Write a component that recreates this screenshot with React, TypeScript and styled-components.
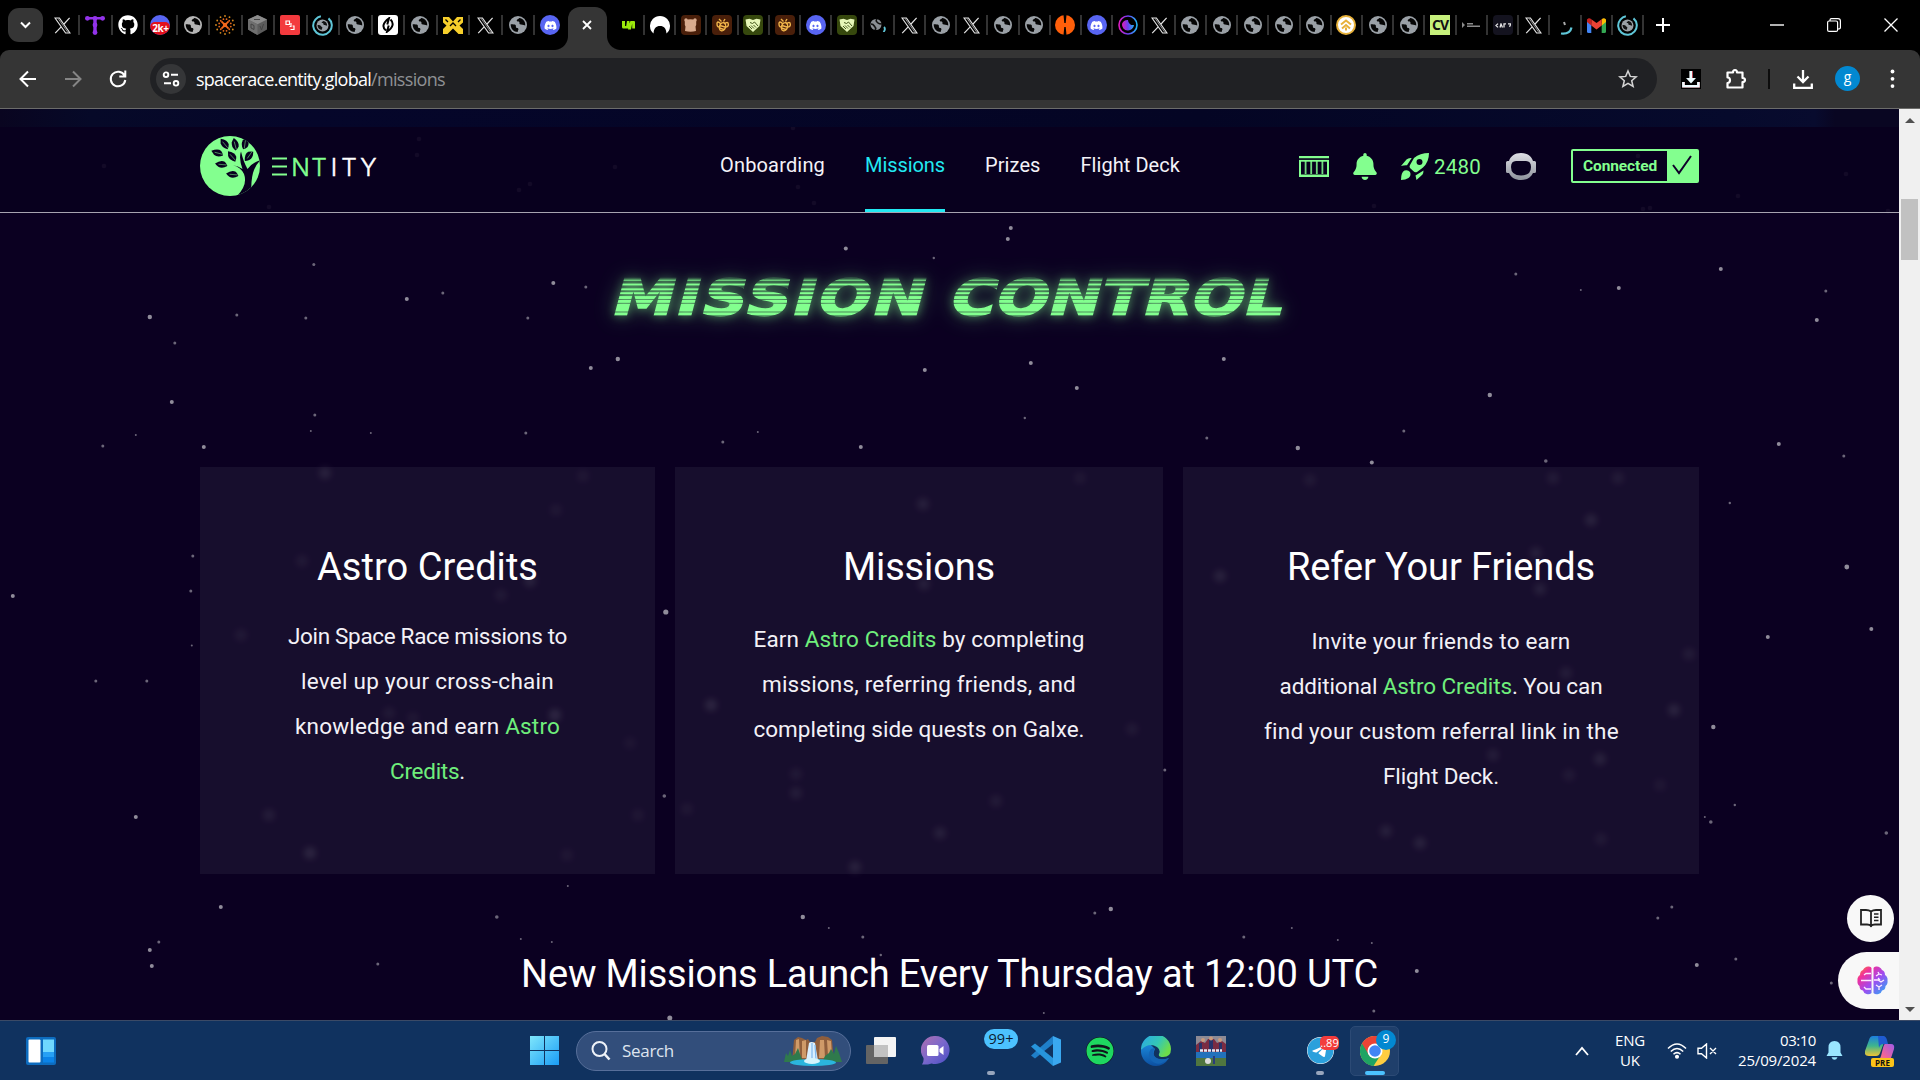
import React, { useLayoutEffect, useRef, useState } from "react";
import styled, { createGlobalStyle, css } from "styled-components";
import { FaBell, FaGithub, FaDiscord, FaSpotify, FaTelegram } from "react-icons/fa6";

const GREEN = "#83ff8f";
const SITE = `Roboto, "Liberation Sans", sans-serif`;
const OS = `"Open Sans", "Noto Sans", sans-serif`;

const Global = createGlobalStyle`
  * { box-sizing: border-box; }
  body { margin: 0; background: #000; overflow: hidden; }
  svg { display: block; flex: none; }
`;

/* Tracks a line of text so that it occupies a given measure. */
const Line = styled.span<{ $w: number }>`
  display: block;
  width: ${(p) => p.$w}px;
  flex: none;
  white-space: nowrap;
`;
function Fit({ w, children }: { w: number; children: React.ReactNode }) {
  const ref = useRef<HTMLSpanElement>(null);
  const [spacing, setSpacing] = useState(0);
  useLayoutEffect(() => {
    const el = ref.current;
    if (!el) return;
    const n = (el.textContent || "").length;
    setSpacing((w - el.getBoundingClientRect().width) / n);
  }, [w]);
  return (
    <Line $w={w}>
      <span ref={ref} style={{ letterSpacing: spacing }}>
        {children}
      </span>
    </Line>
  );
}

/* ---------- Shell ---------- */
const Screen = styled.div`
  width: 1920px;
  height: 1080px;
  display: flex;
  flex-direction: column;
  overflow: hidden;
  background: #000;
`;

/* ---------- Tab strip ---------- */
const TabStrip = styled.div`
  height: 50px;
  flex: none;
  display: flex;
  align-items: center;
  padding-left: 8px;
  background: #000;
`;
const TabSearch = styled.div`
  width: 35px;
  height: 34px;
  border-radius: 11px;
  background: #353535;
  display: flex;
  align-items: center;
  justify-content: center;
`;
const Tabs = styled.div<{ $ml: number }>`
  display: flex;
  margin-left: ${(p) => p.$ml}px;
`;
const Tab = styled.div<{ $w: number; $line: boolean }>`
  width: ${(p) => p.$w}px;
  height: 20px;
  flex: none;
  display: flex;
  align-items: center;
  justify-content: center;
  border-right: 2px solid ${(p) => (p.$line ? "#333" : "transparent")};
`;
const ActiveTab = styled.div`
  width: 39px;
  height: 43px;
  align-self: flex-end;
  flex: none;
  display: flex;
  align-items: center;
  justify-content: center;
  padding-bottom: 7px;
  background: #353535;
  border-radius: 12px 12px 0 0;
`;
const Flare = styled.div<{ $side: "left" | "right" }>`
  width: 14px;
  height: 14px;
  flex: none;
  align-self: flex-end;
  margin-left: ${(p) => (p.$side === "left" ? -13.8 : 0)}px;
  background: radial-gradient(circle at ${(p) => (p.$side === "left" ? "0 0" : "100% 0")}, #000 13.5px, #353535 14.5px);
`;
const WindowButtons = styled.div`
  display: flex;
  align-items: center;
  gap: 43px;
  margin: 0 22px 0 auto;
`;
const NewTab = styled.div`
  margin-left: 12px;
`;
const Square = styled.div<{ $bg: string; $r?: number; $color?: string; $size?: number }>`
  width: 20px;
  height: 20px;
  border-radius: ${(p) => p.$r ?? 3}px;
  background: ${(p) => p.$bg};
  color: ${(p) => p.$color ?? "#fff"};
  font: 700 ${(p) => p.$size ?? 12}px/20px ${OS};
  letter-spacing: -1px;
  text-align: center;
  overflow: hidden;
  display: flex;
  align-items: center;
  justify-content: center;
`;
const DiscordBadge = styled.div`
  height: 13px;
  width: 20px;
  margin-top: 7px;
  border-radius: 5px;
  background: #e3101b;
  color: #fff;
  font: 700 10px/12px ${OS};
  letter-spacing: -0.4px;
  text-align: center;
`;

/* ---------- Toolbar ---------- */
const ToolbarWrap = styled.div`
  height: 59px;
  flex: none;
  background: #353535;
  border-bottom: 1px solid #6c6c6a;
  border-radius: 9px 9px 0 0;
  display: flex;
  align-items: center;
  padding: 0 20px 1px 18px;
`;
const NavButtons = styled.div`
  display: flex;
  gap: 25px;
  margin-right: 22px;
`;
const Omnibox = styled.div`
  width: 1507px;
  height: 42px;
  flex: none;
  border-radius: 21px;
  background: #202124;
  display: flex;
  align-items: center;
  padding: 0 19px 0 6px;
  color: #fff;
  font: 400 18px/42px ${OS};
`;
const SiteInfo = styled.div`
  width: 30px;
  height: 30px;
  border-radius: 50%;
  background: #353638;
  display: flex;
  align-items: center;
  justify-content: center;
  margin-right: 10px;
`;
const Path = styled.div`
  color: #8f9194;
  margin-right: auto;
`;
const Extensions = styled.div`
  display: flex;
  align-items: center;
  margin-left: 24px;
`;
const Puzzle = styled.svg`
  margin-left: 24px;
`;
const Divider = styled.div`
  width: 2px;
  height: 20px;
  background: #0c0c0c;
  margin: 0 23px 0 21px;
`;
const Avatar = styled.div`
  width: 25px;
  height: 25px;
  border-radius: 50%;
  background: #0288d1;
  color: #fff;
  font: 400 14px/21px ${OS};
  text-align: center;
  margin: 0 30px 0 22px;
`;

/* ---------- Page ---------- */
const Viewport = styled.div`
  position: relative;
  height: 911px;
  flex: none;
  display: flex;
  background: #0b0021;
`;
const Stars = styled.svg`
  position: absolute;
  inset: 0;
`;
const Page = styled.div`
  position: relative;
  width: 1899px;
  display: flex;
  flex-direction: column;
  align-items: center;
  font-family: ${SITE};
  color: #fff;
`;
const Banner = styled.div`
  width: 100%;
  height: 18px;
  flex: none;
  background: linear-gradient(90deg, #090520 0, #060928 90px, #05062a 300px, #040524 1200px, #060a2c 1730px, #080b2e 1815px, #090622 1835px);
`;
const Header = styled.header`
  width: 100%;
  height: 86px;
  flex: none;
  padding: 0 200px;
  display: flex;
  border-bottom: 1px solid #a7a3b0;
  background: rgba(8, 0, 30, 0.75);
`;
const Brand = styled.div`
  display: flex;
  align-items: center;
  width: 520px;
  padding-bottom: 8px;
`;
const Nav = styled.nav`
  display: flex;
  gap: 40px;
  font-size: 20px;
`;
const NavItem = styled.div<{ $active?: boolean }>`
  height: 85px;
  padding-top: 21px;
  line-height: 34px;
  color: ${(p) => (p.$active ? "#22e9f2" : "#f4f2f8")};
  border-bottom: 3px solid ${(p) => (p.$active ? "#22e9f2" : "transparent")};
`;
const Status = styled.div`
  display: flex;
  align-items: center;
  margin-left: auto;
  padding-bottom: 8px;
  color: ${GREEN};
  font-size: 20.5px;
`;
const Item = styled.div<{ $mr: number }>`
  display: flex;
  align-items: center;
  gap: 5px;
  margin-right: ${(p) => p.$mr}px;
  padding-top: 1px;
  ${Line} {
    padding-top: 2px;
  }
`;
const Bell = styled(FaBell)`
  width: 24px;
  height: 27px;
`;
const Connected = styled.div`
  width: 128px;
  height: 34px;
  border: 2px solid ${GREEN};
  border-radius: 2px;
  display: flex;
  align-items: center;
  font-size: 15.5px;
  font-weight: 700;
  padding-left: 10px;
`;
const Check = styled.div`
  width: 30px;
  height: 30px;
  margin-left: auto;
  background: ${GREEN};
  display: flex;
  align-items: center;
  justify-content: center;
`;
const Title = styled.h1`
  margin: 58px 0 0;
  height: 54px;
  flex: none;
  width: 667px;
  display: flex;
  justify-content: center;
  filter: drop-shadow(0 0 5px rgba(131, 255, 143, 0.5)) drop-shadow(0 0 10px rgba(131, 255, 143, 0.35));
`;
const TitleText = styled.span`
  font: 700 50px/54px "DejaVu Sans", sans-serif;
  white-space: nowrap;
  transform: skewX(-15deg) scaleX(1.245);
  -webkit-text-stroke: 1.4px transparent;
  color: transparent;
  background-clip: text;
  -webkit-background-clip: text;
  background-image: ${() => {
    const thick = [1, 1.6, 2, 2.4, 2.7, 3, 3.2, 3.2, 3.3, 3.3];
    const gap = "rgba(131,255,143,.22)";
    const stops = thick.map((t, i) => {
      const y = 9 + i * 4;
      return `${gap} ${y}px, ${GREEN} ${y}px, ${GREEN} ${y + t}px, ${gap} ${y + t}px`;
    });
    return `linear-gradient(180deg, ${stops.join(", ")})`;
  }};
`;
const Spaced = styled.span`
  letter-spacing: 1.6px;
`;
const Cards = styled.div`
  display: grid;
  grid-template-columns: 455px 488px 516px;
  gap: 20px;
  margin-top: 142px;
  width: 1499px;
  height: 407px;
  flex: none;
`;
const Card = styled.section`
  background: rgba(235, 255, 255, 0.053);
  display: flex;
  flex-direction: column;
  align-items: center;
  padding-top: 76px;
`;
const Heading = styled.h2`
  margin: 0;
  font-size: 38px;
  font-weight: 400;
  line-height: 48px;
`;
const Copy = styled.div<{ $mt: number }>`
  margin-top: ${(p) => p.$mt}px;
  display: flex;
  flex-direction: column;
  align-items: center;
  font-size: 22.5px;
  line-height: 45px;
  font-weight: 400;
  color: #f3f1f7;
  em {
    font-style: normal;
    color: #6fee7c;
  }
`;
const Launch = styled.div`
  margin-top: 76px;
  height: 48px;
`;
const Scrollbar = styled.div`
  position: relative;
  width: 21px;
  background: #f0f0f0;
  display: flex;
  flex-direction: column;
  align-items: center;
`;
const Arrow = styled.div<{ $down?: boolean }>`
  width: 0;
  height: 0;
  border: 5px solid transparent;
  ${(p) =>
    p.$down
      ? css`border-top-color: #505050; margin: auto 0 3px;`
      : css`border-bottom-color: #505050; margin-top: 4px;`}
`;
const Thumb = styled.div`
  width: 17px;
  height: 61px;
  margin-top: 76px;
  background: #c1c1c1;
`;
const Floating = styled.aside`
  position: absolute;
  right: 21px;
  top: 786px;
  display: flex;
  flex-direction: column;
  align-items: flex-end;
  gap: 10px;
`;
const BookButton = styled.div`
  width: 47px;
  height: 47px;
  margin-right: 5px;
  border-radius: 50%;
  background: #f8f8f8;
  display: flex;
  align-items: center;
  justify-content: center;
`;
const BrainButton = styled.div`
  width: 61px;
  height: 57px;
  border-radius: 29px 0 0 29px;
  background: #f8f8f8;
  display: flex;
  align-items: center;
  padding-left: 19px;
`;

/* ---------- Taskbar ---------- */
const Taskbar = styled.footer`
  height: 60px;
  flex: none;
  display: flex;
  align-items: center;
  background: #10325f;
  border-top: 1px solid #3b4a66;
  font-family: ${OS};
  color: #fff;
`;
const Slot = styled.div<{ $ml: number; $w?: number }>`
  position: relative;
  margin-left: ${(p) => p.$ml}px;
  width: ${(p) => p.$w ?? 30}px;
  height: 60px;
  flex: none;
  display: flex;
  align-items: center;
  justify-content: center;
`;
const SearchBox = styled.div`
  width: 275px;
  height: 40px;
  margin-left: 17px;
  flex: none;
  border: 1px solid #576f9a;
  border-radius: 20px;
  background: #324e7b;
  display: flex;
  align-items: center;
  padding: 0 8px 0 14px;
  font-size: 17px;
  color: #dfe5ef;
`;
const SearchLabel = styled.div`
  margin: 0 auto 0 11px;
`;
const Dot = styled.div<{ $w?: number; $c?: string }>`
  position: absolute;
  bottom: 6px;
  left: 50%;
  width: ${(p) => p.$w ?? 8}px;
  height: 4px;
  margin-left: -${(p) => (p.$w ?? 8) / 2}px;
  border-radius: 2px;
  background: ${(p) => p.$c ?? "#98a6bd"};
`;
const Count = styled.div`
  position: absolute;
  top: 8px;
  left: 8px;
  width: 34px;
  height: 20px;
  border-radius: 10px;
  background: #4cc2ff;
  color: #0c1c30;
  font-size: 14.5px;
  line-height: 20px;
  text-align: center;
`;
const RedBadge = styled.div`
  position: absolute;
  top: 15px;
  left: 15px;
  width: 19px;
  height: 14px;
  border-radius: 5px;
  background: #f33c3c;
  font-size: 11px;
  line-height: 13px;
  text-align: center;
`;
const SpotifyMark = styled(FaSpotify)`
  background: #10141c;
  border-radius: 50%;
`;
const TelegramMark = styled(FaTelegram)`
  background: #fff;
  border-radius: 50%;
`;
const BlueBadge = styled.div`
  position: absolute;
  top: 3px;
  right: 2px;
  width: 20px;
  height: 20px;
  border-radius: 50%;
  background: #0288d1;
  font-size: 12px;
  line-height: 18px;
  text-align: center;
`;
const ActiveApp = styled.div`
  position: relative;
  width: 49px;
  height: 50px;
  margin-left: 15px;
  flex: none;
  border-radius: 5px;
  background: #1f3f6b;
  border: 1px solid #2c4a75;
  display: flex;
  align-items: center;
  justify-content: center;
  ${Dot} {
    bottom: 0;
  }
`;
const TwoLine = styled.div<{ $ml: number; $align: string }>`
  margin-left: ${(p) => p.$ml}px;
  display: flex;
  flex-direction: column;
  align-items: ${(p) => p.$align};
  font-size: 15px;
  line-height: 20px;
  margin-top: -2px;
`;
const Pre = styled.div`
  position: absolute;
  left: 6px;
  bottom: 14px;
  width: 23px;
  height: 9px;
  border-radius: 2px;
  background: #fcc419;
  color: #111;
  font: 700 8px/9px ${OS};
  text-align: center;
`;

/* ---------- Small drawings ---------- */
const XIcon = () => (
  <svg width="17" height="17" viewBox="0 0 17 17" fill="none" stroke="#e4e4e4" strokeWidth="1.2">
    <path d="M1 1h4.4L16 16h-4.4zM15.6.8 9.6 7.5M7.4 9.7 1.2 16.2" />
    <path d="M4 1.4 14 15.6" strokeWidth=".6" />
  </svg>
);
const GlobeIcon = ({ c = "#9aa0a6", s = 18 }: { c?: string; s?: number }) => (
  <svg width={s} height={s} viewBox="0 0 18 18">
    <circle cx="9" cy="9" r="9" fill={c} />
    <path d="M1.7 8.3c2.5.2 4.3-.1 5 .9.6 1-.2 1.7.4 2.4.9.9 2 .3 2.3 1.3.2.9-.8 1.6-.7 3.2-4-.1-7.2-3.4-7-7.800z" fill="#050505" />
    <path d="M10.2 1.900c-.5 1.2-2.600 1.1-2.500 2.500.1 1.300 2 .6 2.600 1.500.5.9-.3 1.800.6 2.300 1.400.7 3.400.3 5.300 1.200C16.700 5.400 14 2.400 10.200 1.900z" fill="#050505" />
  </svg>
);
const RingGlobe = ({ s = 21 }: { s?: number }) => (
  <svg width={s} height={s} viewBox="0 0 21 21" fill="none">
    <circle cx="10.5" cy="10.5" r="9.3" stroke="#5fc6d8" strokeWidth="2" strokeDasharray="50 8.4" transform="rotate(-50 10.5 10.5)" />
    <circle cx="10.5" cy="10.5" r="6" fill="#9aa0a6" />
    <path d="M5.5 10c2 0 3 0 3.3 1 .3 1 1.6.8 1.6 1.6s-.6 1.2-.5 2.2c-2.5 0-4.4-2-4.4-4.8zM11.3 6c-.4.8-1.7.8-1.6 1.6.1.9 1.3.5 1.6 1 .4.7 0 1.3.6 1.5.9.3 2 .1 3.2.7.2-2.5-1.4-4.4-3.8-4.8z" fill="#111" />
  </svg>
);
const DiscordIcon = () => (
  <Square $bg="#5865f2" $r={10}>
    <FaDiscord size={13} color="#fff" />
  </Square>
);
const TIcon = () => (
  <svg width="20" height="20" viewBox="0 0 20 20" fill="#9333ea">
    <path d="M2 2h16v2.600H2zM8.300 3h3.400v15H8.300z" />
    <circle cx="2.400" cy="3.300" r="2.400" /><circle cx="10" cy="3.300" r="2.400" /><circle cx="17.600" cy="3.300" r="2.400" />
    <circle cx="10" cy="10" r="2.400" /><circle cx="10" cy="17.500" r="2.400" />
  </svg>
);
const Burst = () => (
  <svg width="20" height="20" viewBox="-10 -10 20 20">
    <path d="M-3.600-3.600 3.600 3.600M3.600-3.600-3.600 3.600" stroke="#f0681c" strokeWidth="1.800" />
    <circle r="2.200" fill="#f0681c" />
    {Array.from({ length: 12 }, (_, i) => {
      const a = (i * Math.PI) / 6;
      return (
        <g key={i}>
          <circle cx={9 * Math.cos(a)} cy={9 * Math.sin(a)} r=".9" fill="#d98a1e" />
          <circle cx={6 * Math.cos(a + 0.26)} cy={6 * Math.sin(a + 0.26)} r=".9" fill="#e3691c" />
        </g>
      );
    })}
  </svg>
);
const Cube = () => (
  <svg width="19" height="20" viewBox="0 0 19 20">
    <path d="M9.500 0 19 4.600v10L9.500 20 0 14.600v-10z" fill="#5c5c5c" />
    <path d="M9.500 0 19 4.600 9.500 9.200 0 4.600z" fill="#8b8b8b" />
    <path d="M9.500 9.200V20L0 14.600v-10z" fill="#6f6f6f" />
    <path d="M3 9v4l3 1.500v-4zM12 11l1.500 4 2-6M6 4.500h6" stroke="#444" fill="none" />
  </svg>
);
const RedSquares = () => (
  <Square $bg="#f33a3e" $r={2}>
    <svg width="10" height="11" viewBox="0 0 10 11" fill="none" stroke="#fff" strokeWidth="1.200">
      <path d="M1 4.500V1h3.500v3.500zM4.500 6.500H6V3M5.500 9.500H9V6H7.500" />
    </svg>
  </Square>
);
const Leaf = () => (
  <Square $bg="#fff">
    <svg width="14" height="16" viewBox="0 0 14 16" fill="none" stroke="#000" strokeWidth="2">
      <path d="M5 13.500C1 10.500 1.500 6 8 1.200L6.300 7.500M9.500 2.500C13 6 12.500 10 6 14.800L7.700 8.500" />
    </svg>
  </Square>
);
const YellowM = () => (
  <svg width="20" height="17" viewBox="0 0 20 17" fill="#f7cf2b">
    <path d="M0 0h6l4 4.500L14 0h6v5.500l-3.500 3L20 12v5h-4.500L10 11.500 4.500 17H0v-5l3.500-3.500L0 5.500z" />
    <path d="M2.500 2.500 5 5M17.500 2.500 15 5M7 9l3-3 3 3M8 17l2-2 2 2" stroke="#000" strokeWidth="1.300" fill="none" />
  </svg>
);
const GreenU = () => (
  <svg width="13" height="10" viewBox="0 0 13 10" fill="#9be80c">
    <path d="M0 1h3v5h1.200L5 1h2.500L6.800 8.500H1.500Q0 8.500 0 7zM6 9.500 7 4l1.500-3H12q1 0 1 1v6.500h-2.800V3.500L9 9.500z" />
  </svg>
);
const Arch = () => (
  <svg width="20" height="20" viewBox="0 0 20 20">
    <path d="M3.500 18.500A10 10 0 1 1 16.500 18.500C16 13 14 11 10 11S4 13 3.500 18.500z" fill="#fff" />
  </svg>
);
const Bear = () => (
  <Square $bg="#4a1f0a" $r={4}>
    <svg width="13" height="14" viewBox="0 0 13 14" fill="#d9ab8e">
      <circle cx="2" cy="2" r="1.700" /><circle cx="11" cy="2" r="1.700" />
      <path d="M.8 2q5.700-1.500 11.400 0v5l-.7 1.500.5 4.500q-5.500 1.500-11 0l.5-4.500L.8 7z" />
    </svg>
  </Square>
);
const Honey = () => (
  <Square $bg="#4a1f0a" $r={4}>
    <svg width="13" height="14" viewBox="0 0 13 14" fill="none" stroke="#f0b54a" strokeWidth="1.400">
      <path d="M3 1l2.500 2.500M9 1 7.500 3.500" />
      <ellipse cx="6.500" cy="8.700" rx="3" ry="4.200" transform="rotate(20 6.500 8.700)" />
      <path d="M4 7.500 9 9M3.500 10l4.500 1.500" />
      <path d="M5 6Q1 2 1 6t3.500 2.500M8 6q4-3 4.300 0T9.500 9" />
    </svg>
  </Square>
);
const Hands = () => (
  <Square $bg="#36480d" $r={4}>
    <svg width="16" height="14" viewBox="0 0 16 14">
      <path d="M.5 1.500l4-.8L8 2l3.500-1.300 4 .8-1 6.500L8 14 1.500 8z" fill="#e6f6b8" />
      <path d="M5 4.500l2.500 1L9.500 4l3.500 4M4 8l3 3M6 7.500l3 3M8.500 7l2.500 2.500" stroke="#36480d" fill="none" strokeWidth=".9" />
    </svg>
  </Square>
);
const TinyGlobe = () => (
  <svg width="16" height="14" viewBox="0 0 16 14">
    <circle cx="6" cy="6.500" r="5.500" fill="#8a8f94" />
    <path d="M1 6c3 0 3 2 4 3s1 2 0 3M7 1C5 3 7 4 8 5s2 1 4 1" stroke="#111" strokeWidth="1.600" fill="none" />
    <path d="M14 9q2 2-.5 5" stroke="#5fc6d8" strokeWidth="1.800" fill="none" />
  </svg>
);
const OrangeH = () => (
  <svg width="20" height="20" viewBox="0 0 20 20">
    <circle cx="10" cy="10" r="10" fill="#ff5f0a" />
    <path d="M8.500 0h3L10.700 8h-1.400zM8.500 20h3L10.700 12h-1.400z" fill="#000" />
  </svg>
);
const Swirl = () => (
  <svg width="20" height="20" viewBox="0 0 20 20" fill="none">
    <defs>
      <linearGradient id="swirl" x1="0" x2="1">
        <stop offset="0" stopColor="#e01cc0" /><stop offset=".5" stopColor="#6a3ff0" /><stop offset="1" stopColor="#21b5f5" />
      </linearGradient>
    </defs>
    <circle cx="10" cy="10" r="9" stroke="url(#swirl)" strokeWidth="1.600" />
    <path d="M4 9a6 6 0 1 0 12 1 5 5 0 0 1-6-5 6 6 0 0 0-6 4z" fill="url(#swirl)" />
  </svg>
);
const GoldCoin = () => (
  <svg width="20" height="20" viewBox="0 0 20 20" fill="none">
    <circle cx="10" cy="10" r="9" fill="#fff" stroke="#e7b13a" strokeWidth="2" />
    <path d="M5 9.500 10 5.500l5 4M6 13.500l4-3.500 4 3.500M10 12.500v3" stroke="#e7b13a" strokeWidth="2" />
  </svg>
);
const CoreText = () => (
  <svg width="18" height="6" viewBox="0 0 18 6">
    <path d="M0 0l3 3-3 3zM5 1h6v1.500H5zM5 3.500h13V5H5z" fill="#8b8b8b" />
  </svg>
);
const Darks = () => (
  <Square $bg="#14131f" $r={4} $size={6}>
    <svg width="16" height="5" viewBox="0 0 16 5" fill="none" stroke="#e8e8e8" strokeWidth="1.300">
      <path d="M3 .6 1 2.500l2 1.900M5 4.500 6 1l1.500 3.500M9 4.500V.8h2M13 .8h3l-1.500 3" />
    </svg>
  </Square>
);
const Arc = () => (
  <svg width="20" height="20" viewBox="0 0 20 20" fill="none">
    <path d="M6 18.500q9 1 10.500-6" stroke="#5fc6d8" strokeWidth="2.200" />
    <path d="M9 7l1 3" stroke="#aaa" strokeWidth="2" />
  </svg>
);
const Gmail = () => (
  <svg width="19" height="15" viewBox="0 0 19 15">
    <path d="M0 2v11.500Q0 15 1.500 15H4.300V5z" fill="#4285f4" />
    <path d="M14.700 15h2.800q1.500 0 1.500-1.500V2l-4.300 3z" fill="#34a853" />
    <path d="M14.700 5V1.200Q17-.7 19 1.500V4l-4.300 3.600z" fill="#fbbc04" />
    <path d="M4.300 7.600V1.200L9.500 5l5.200-3.800v6.400L9.500 11.500z" fill="#ea4335" />
    <path d="M0 1.500Q2-.7 4.300 1.200v6.400L0 4z" fill="#c5221f" />
  </svg>
);

const X = <XIcon />, G = <GlobeIcon />, D = <DiscordIcon />;
const leftTabs = [
  X, <TIcon />, <FaGithub size={20} color="#fff" />,
  <Square $bg="#5865f2" $r={10}><DiscordBadge>2k+</DiscordBadge></Square>,
  <GlobeIcon c="#b5b5b5" />, <Burst />, <Cube />, <RedSquares />, <RingGlobe />, G, <Leaf />, G, <YellowM />, X, G, D,
];
const rightTabs = [
  <GreenU />, <Arch />, <Bear />, <Honey />, <Hands />, <Honey />, D, <Hands />, <TinyGlobe />, X, G, X, G, G,
  <OrangeH />, D, <Swirl />, X, G, G, G, G, G, <GoldCoin />, G, G,
  <Square $bg="#c6f07c" $r={0} $color="#111" $size={14}>CV</Square>,
  <CoreText />, <Darks />, X, <Arc />, <Gmail />, <RingGlobe />,
];

const Ico = ({ d, s = 20, w = 2, c = "#fff", box = 20 }: { d: string; s?: number; w?: number; c?: string; box?: number }) => (
  <svg width={s} height={s} viewBox={`0 0 ${box} ${box}`} fill="none" stroke={c} strokeWidth={w}>
    <path d={d} />
  </svg>
);

const leaves: [number, number, number][] = [
  [24.5, 8, 50], [35, 8.5, 75], [45, 7.5, 98], [17.5, 17, 15], [32, 20.5, 48], [49, 20, -55], [21.5, 28.5, 5], [32.5, 38.5, 5],
];
const Logo = () => (
  <svg width="182" height="60" viewBox="0 0 182 60">
    <defs>
      <clipPath id="disc"><circle cx="30" cy="30" r="30" /></clipPath>
    </defs>
    <g clipPath="url(#disc)">
      <rect width="60" height="60" fill={GREEN} />
      <path d="M33 29.300Q41 31.500 44 38Q48 49 37 60L48 62L51.300 51Q51.500 40 54 34Q56.500 28 60.500 24Q53 26 47.500 33Q43.500 26 41 15.500Q38.500 22 42.500 33Q38 30 33 29.300Z" fill="#090020" />
      {leaves.map(([x, y, r]) => (
        <g key={`${x}`} transform={`translate(${x} ${y}) rotate(${r})`}>
          <path d="M-6.500-.5Q-1-5 3-3Q5-1.500 6 1Q1 4.500-3 2.500Q-5 1-6.500-.5Z" fill="#090020" />
          <path d="M-3 0H5" stroke={GREEN} strokeWidth=".5" />
        </g>
      ))}
    </g>
    <path d="M72 22.400H87M72 30.500H87M72 38.500H87" stroke={GREEN} strokeWidth="2" />
    <g fontFamily="Inter, sans-serif" fontSize="24.500" fontWeight="300" textAnchor="middle" strokeWidth=".5">
      <text y="39.500" x="100.500 119" fill={GREEN} stroke={GREEN}>NT</text>
      <text y="39.500" x="134 149 168.500" fill="#fff" stroke="#fff">ITY</text>
    </g>
  </svg>
);

/* x, y, radius of the background stars, in page pixels */
const stars: [number, number, number][] = [
  [1010, 119, 2], [1007, 130, 2], [845, 139.5, 2], [313, 155.5, 1.5], [933, 149, 1.2], [552.5, 174, 2], [585, 178, 1.5], [149, 208, 2.2], [236, 206, 1.5], [305, 209, 1.5], [406, 190, 2], [442, 184, 1.5], [527, 209, 1.5], [174, 234, 1.5], [590, 259, 2], [617, 250, 2.2], [924, 261, 2], [1030, 254, 2], [1223, 250, 2], [1076, 279, 2], [171, 293, 2], [102, 337, 1.5], [135, 326, 1], [203, 338, 2], [314, 306, 1.5], [310, 322, 1], [370, 324, 1], [525, 324, 1.5], [722, 333, 1.5], [757, 323, 1], [860, 338, 2], [1024, 309, 1.2], [1297, 339, 2.2], [1206, 329, 1.5], [1403, 322, 1.5], [1489, 286, 2.2], [1618, 179, 2], [1515, 165, 1.5], [1720, 160, 2], [1580, 181, 1], [1816, 211, 2], [1825, 182, 1.5], [1778, 335, 2], [1843, 347, 1.5], [1371, 353.5, 2], [1545, 352, 1.8],
  [1729, 394, 1.2], [1846, 458, 2.4], [1870.5, 520, 2], [1767, 528, 2], [1712.5, 618, 2.2], [1734, 696, 1.2], [1710, 713, 1.8], [1704, 708, 1], [1885.5, 724, 1.8], [192, 447, 1.5], [190, 482, 1.5], [12, 487, 2], [95, 572, 1.5], [146, 572, 1.5], [135, 708, 2], [191, 536.5, 1], [665, 503, 2.6], [663.5, 687, 1.8], [1164, 661, 1.5],
  [567, 777, 1], [220, 798, 2], [496, 808, 1.8], [802, 808, 2.2], [1110, 800, 2.2], [1094, 804, 1.5], [520, 830, 1], [551, 833, 1], [158, 833, 1.5], [149, 841, 2], [151, 857, 2], [377, 855, 1.5], [862, 828, 1.5], [880, 846, 1.2], [828, 819, 1], [1291, 819, 1], [1243, 828, 1.5], [1337, 831, 1], [1371, 834, 1], [1416, 862, 2], [1671, 798, 1.5], [1657, 809, 1.5], [1696, 856, 2], [1735, 850, 1.5], [1830.5, 874, 1.5], [669, 909, 2.5], [1043, 904, 1], [1373, 902, 1.5],
];
const faintStars: [number, number][] = [[419, 30], [417, 46], [615, 58], [530, 75], [519, 81], [104, 57], [269, 98], [798, 78], [814, 94], [1374, 97], [1643, 100], [1650, 99], [1738, 87], [1846, 65], [1888, 102], [1638, 47], [793, 19]];
/* x, y, opacity of the stars seen through the cards */
const hazyStars: [number, number, number][] = [
  [325, 364, .1], [583, 367, .05], [556, 401, .05], [302, 452, .06], [530, 472, .1], [501, 486, .06], [241, 526, .06], [555, 606, .13], [389, 604, .06], [413, 609, .05], [269, 706, .08], [310, 744, .12], [638, 706, .05], [567, 746, .05], [630, 634, .04], [711, 596, .12], [796, 665, .06], [796, 684, .08], [687, 700, .05], [923, 395, .09], [924, 475, .09], [940, 724, .09], [996, 692, .07], [855, 758, .1], [1132, 620, .06], [1080, 369, .05],
  [1310, 371, .06], [1553, 369, .07], [1618, 369, .07], [1591, 411, .1], [1220, 467, .1], [1536, 444, .09], [1540, 480, .09], [1566, 564, .08], [1689, 545, .07], [1674, 601, .11], [1600, 650, .1], [1493, 646, .08], [1569, 666, .06], [1386, 722, .09], [1420, 734, .1], [1601, 730, .06], [1660, 676, .05],
];

const Rocket = () => (
  <svg width="28" height="27" viewBox="0 0 28 27" fill={GREEN}>
    <path fillRule="evenodd" d="M28 0Q28 9 22 14.500L16 19Q14 20 12.500 18.300L9 15Q8 13.500 9 12L13 5Q19 0 28 0zM18.500 6a3 3 0 1 0 .01 6 3 3 0 1 0-.01-6z" />
    <path d="M0 13 5.500 6.500Q7.500 4.500 10.700 5L6 12.200Q3 12 0 13zM15.500 27 14.500 22.500 22.500 17.500Q22.500 20 21.500 21.500zM0 27Q0 19 3.500 17.500 7 16.300 9 19 10.500 22.500 7.500 25 4.500 27 0 27z" />
  </svg>
);
const Taskview = () => (
  <svg width="30" height="28" viewBox="0 0 30 28">
    <rect y="8" width="22" height="19" rx="1" fill="#646464" />
    <rect x="8" width="22" height="20" rx="1" fill="#f4f4f4" />
    <rect x="8" y="8" width="14" height="12" fill="#c2c2c2" />
  </svg>
);
const ChatIcon = () => (
  <svg width="29" height="29" viewBox="0 0 29 29">
    <defs><linearGradient id="chat" x1="0" y1="0" x2="1" y2="1"><stop stopColor="#b06fae" /><stop offset=".5" stopColor="#7a68cc" /><stop offset="1" stopColor="#4a4dc4" /></linearGradient></defs>
    <path d="M14.500 0a14 14 0 1 1-4 27.400Q6 29 1 28.500 3 25.500 2.500 22A14 14 0 0 1 14.500 0z" fill="url(#chat)" />
    <rect x="6" y="9" width="11.500" height="11" rx="1.500" fill="#fff" /><path d="M18.500 13l4-3v9l-4-3z" fill="#fff" />
  </svg>
);
const Waterfall = () => (
  <svg width="58" height="30" viewBox="0 0 58 30">
    <path d="M8 26 10 4l4-3 4 1 4 2 2-1 2 3h5l2-4 5-2 6 1 4 3 2 22z" fill="#8f5e3c" />
    <path d="M11 22 12 4l3-1 1 19zM18 22V5l4-1v18zM35 22l1-18 4 0 1 18zM44 20l-1-16 4 1 1 15z" fill="#cf9a68" />
    <path d="M25 7q2-2 6 0l3 18H22z" fill="#d9efff" /><path d="M28 7v18M31 9l1 15" stroke="#7fb8ee" strokeWidth="1.200" />
    <path d="M0 26l2-9 2 3 2-6 2 6 3-2 3-6 3 9 3 5zM38 26l3-6 4-3 2-4 3 5 2-8 3 7 3 9z" fill="#2f7a4c" />
    <ellipse cx="29" cy="26.500" rx="23" ry="3.500" fill="#2bb5dd" /><ellipse cx="28" cy="25" rx="8" ry="3" fill="#d5f4fc" />
  </svg>
);
const Vscode = () => (
  <svg width="30" height="30" viewBox="0 0 30 30">
    <path d="M22 0v8L4 22.500 0 19.500z" fill="#1f7fc9" /><path d="M22 30v-8L4 7.500 0 10.500z" fill="#2795dc" />
    <path d="M22 0l8 3.500v23L22 30z" fill="#3aa8f0" />
  </svg>
);
const Edge = () => (
  <svg width="30" height="30" viewBox="0 0 30 30">
    <defs>
      <linearGradient id="e1" x1="0" x2="1" y2=".5"><stop stopColor="#2aa7e8" /><stop offset=".6" stopColor="#34c7b5" /><stop offset="1" stopColor="#6ddc4a" /></linearGradient>
      <linearGradient id="e2" x1="0" x2="0" y2="1"><stop stopColor="#1a86d8" /><stop offset="1" stopColor="#0c4fa0" /></linearGradient>
    </defs>
    <path d="M0 14q3-6 10-5l4 4q-4 8 4 10 6 1 10-1Q23 30 15 30A15 15 0 0 1 0 14z" fill="url(#e2)" />
    <path d="M0 14A15 15 0 0 1 30 13q0 8-8 8-5 0-4-3 2-4-2-7Q8 6 0 14z" fill="url(#e1)" />
    <path d="M10 13q-5 7 2 13 7 5 16-4-9 3-14-1-3-3-.5-9z" fill="#1464b4" />
  </svg>
);
const Chrome = () => (
  <svg width="30" height="30" viewBox="0 0 30 30">
    <circle cx="15" cy="15" r="15" fill="#ffcd40" />
    <path d="M15 15 2 7.500A15 15 0 0 0 13.500 30L21 18.500z" fill="#1fa463" />
    <path d="M15 15V8h13.300A15 15 0 0 0 2 7.500L9 19z" fill="#ea4335" />
    <circle cx="15" cy="15" r="7.500" fill="#fff" /><circle cx="15" cy="15" r="5.800" fill="#4285f4" />
  </svg>
);
const Game = () => (
  <svg width="30" height="30" viewBox="0 0 30 30">
    <rect width="30" height="30" fill="#8d8a94" />
    <path d="M0 9l5-4 4 2 3-4h6l3 4 5-2 4 3v10H0z" fill="#7a2c42" /><path d="M3 7h3v11H3zM13 4h4v14h-4zM23 7h3v10h-3z" fill="#27336b" />
    <circle cx="7" cy="4" r="2" fill="#c99a7c" /><circle cx="15" cy="2.500" r="2" fill="#c99a7c" /><circle cx="24" cy="4" r="2" fill="#c99a7c" />
    <path d="M0 16h30v7H0z" fill="#2272bb" /><path d="M4 14.500h22" stroke="#e9e9f2" strokeWidth="2.500" strokeDasharray="3 1" />
    <rect y="22" width="30" height="8" fill="#50763f" /><circle cx="12" cy="25" r="3" fill="#dcdcdc" /><path d="M18 20v8" stroke="#2b3c7a" strokeWidth="2" />
  </svg>
);
const Copilot = () => (
  <svg width="30" height="29" viewBox="0 0 30 29">
    <defs>
      <linearGradient id="c1" x1="0" x2="0" y2="1"><stop stopColor="#1c7fe0" /><stop offset=".5" stopColor="#3fb68b" /><stop offset="1" stopColor="#f0c534" /></linearGradient>
      <linearGradient id="c2" x1="1" x2="0" y2="1"><stop stopColor="#a05be8" /><stop offset=".6" stopColor="#f0649a" /><stop offset="1" stopColor="#f8935c" /></linearGradient>
    </defs>
    <path d="M8 0h9q4 0 3 4l-5 13q-1 3-4 3H4q-5 0-4-5L4 4q1-4 4-4z" fill="url(#c1)" />
    <path d="M13 0h5q3 0 4 4l1 4h-5q-3 0-4 4z" fill="#1f5bd0" />
    <path d="M20 8h6q4 0 3 5l-3 9q-1 4-5 4h-9q3-2 4-6l2-8q1-4 2-4z" fill="url(#c2)" />
  </svg>
);
const Brain = () => (
  <svg width="31" height="29" viewBox="0 0 31 29">
    <defs><linearGradient id="brain" x1="0" y1="0" x2="1" y2="1"><stop stopColor="#ff8a1f" /><stop offset=".25" stopColor="#f0309c" /><stop offset=".55" stopColor="#a04bf0" /><stop offset="1" stopColor="#1fb4f5" /></linearGradient></defs>
    <path d="M14.500 2v25q-2 2-5 1-3-1-3.500-3.500Q2.500 24 2.500 20 0 18 .5 14.500 0 11 3 9 3 5 6 4 8 0 12 .5q2 0 2.500 1.500zM16.500 2v25q2 2 5 1 3-1 3.500-3.500 3.500-.5 3.500-4.500 2.500-2 2-5.500.5-3.500-2.500-5.500 0-4-3-5Q23 0 19 .5q-2 0-2.500 1.500z" fill="url(#brain)" />
    <path d="M14 7.500H9L7 9M4 14.500h10.500M14 23H9l-2-2M19 10l3-2-1-2M22 8l3 1M17 14h4l3 2 3-2M23 14l-2-2M19 19l3 2v3M22 21l3-2" stroke="#ffe9ff" strokeWidth="1.300" fill="none" />
  </svg>
);

export default function App() {
  return (
    <Screen>
      <Global />
      <TabStrip>
        <TabSearch><Ico d="M1 2.500 5.500 7 10 2.500" s={11} box={11} /></TabSearch>
        <Tabs $ml={4.6}>
          {leftTabs.map((icon, i) => <Tab key={i} $w={32.5} $line={i < 15}>{icon}</Tab>)}
        </Tabs>
        <Flare $side="left" />
        <ActiveTab><Ico d="M1 1l8 8M9 1 1 9" s={10} box={10} w={1.8} /></ActiveTab>
        <Flare $side="right" />
        <Tabs $ml={-7}>
          {rightTabs.map((icon, i) => <Tab key={i} $w={31.23} $line>{icon}</Tab>)}
        </Tabs>
        <NewTab><Ico d="M7 0v14M0 7h14" s={14} box={14} /></NewTab>
        <WindowButtons>
          <Ico d="M0 7h14" s={14} box={14} w={1.4} />
          <svg width="14" height="14" viewBox="0 0 14 14" fill="none" stroke="#fff" strokeWidth="1.200">
            <rect x=".6" y="3" width="10" height="10.400" rx="1.500" /><path d="M3 3V2q0-1.400 1.400-1.400H11q2.400 0 2.400 2.400v6.500q0 1.500-2.500 1.500" />
          </svg>
          <Ico d="M.5.5l13 13M13.500.5l-13 13" s={14} box={14} w={1.3} />
        </WindowButtons>
      </TabStrip>

      <ToolbarWrap>
        <NavButtons>
          <Ico d="M18 10H3M10 2.500 2.500 10 10 17.500" />
          <Ico d="M2 10h15M10 2.500 17.500 10 10 17.500" c="#858585" />
          <Ico d="M16.500 6.500A7.300 7.300 0 1 0 17.300 11M17.300 1.500v6h-6" />
        </NavButtons>
        <Omnibox>
          <SiteInfo>
            <svg width="18" height="16" viewBox="0 0 18 16" fill="none" stroke="#fff" strokeWidth="1.900">
              <circle cx="4" cy="3.700" r="2.300" /><path d="M9 3.700h7M2 12.300h7" /><circle cx="14" cy="12.300" r="2.300" />
            </svg>
          </SiteInfo>
          <Fit w={175}>spacerace.entity.global</Fit>
          <Path><Fit w={74}>/missions</Fit></Path>
          <Ico d="M10 2l2.300 5.400 5.900.5-4.500 3.900 1.400 5.700L10 14.400l-5.100 3.100 1.400-5.700-4.500-3.900 5.900-.5z" w={1.5} c="#d5d5d5" />
        </Omnibox>
        <Extensions>
          <Square $bg="#000" $r={0}>
            <svg width="18" height="18" viewBox="0 0 18 18" fill="none" strokeWidth="2.600">
              <path d="M9.500 1v9M1.600 12v4.200h15V12" stroke="#e25a6a" /><path d="M8.700 1v9M1.400 12v4.200h15V12" stroke="#eefcff" />
              <path d="M4 8h10l-5 5.500z" fill="#eefcff" />
            </svg>
          </Square>
          <Puzzle width="22" height="22" viewBox="0 0 22 22" fill="none" stroke="#fff" strokeWidth="2.200">
            <path d="M2.500 4.500H8Q8 2 10 2t2 2.500h5.500V10q2.500 0 2.500 2t-2.500 2v5.500h-15V15Q5 15 5 12.200T2.500 9.500z" strokeLinejoin="round" />
          </Puzzle>
          <Divider />
          <Ico d="M10 1v11M4.500 7.500 10 13l5.500-5.500M1.200 14.500V19h17.600v-4.500" s={20} box={20} w={2.3} />
          <Avatar>g</Avatar>
          <svg width="5" height="20" viewBox="0 0 5 20" fill="#fff"><circle cx="2.500" cy="2.500" r="1.900" /><circle cx="2.500" cy="9.800" r="1.900" /><circle cx="2.500" cy="17.100" r="1.900" /></svg>
        </Extensions>
      </ToolbarWrap>

      <Viewport>
        <Stars width="1899" height="911" viewBox="0 0 1899 911" fill="#fff">
          <defs><filter id="haze" x="-200%" y="-200%" width="500%" height="500%"><feGaussianBlur stdDeviation="3.500" /></filter></defs>
          {stars.map(([x, y, r], i) => <circle key={i} cx={x + 0.8} cy={y} r={r} opacity={r > 1.9 ? 0.55 : 0.4} />)}
          {faintStars.map(([x, y], i) => <circle key={i} cx={x} cy={y} r="2.300" opacity=".17" />)}
          {hazyStars.map(([x, y, o], i) => <circle key={i} cx={x} cy={y} r="6" opacity={o * 0.85} filter="url(#haze)" />)}
        </Stars>
        <Page>
          <Banner />
          <Header>
            <Brand><Logo /></Brand>
            <Nav>
              <NavItem><Fit w={105}>Onboarding</Fit></NavItem>
              <NavItem $active><Fit w={80}>Missions</Fit></NavItem>
              <NavItem><Fit w={55.5}>Prizes</Fit></NavItem>
              <NavItem><Fit w={99.5}>Flight Deck</Fit></NavItem>
            </Nav>
            <Status>
              <Item $mr={24}>
                <svg width="30" height="21" viewBox="0 0 30 21" fill="none" stroke={GREEN}>
                  <path d="M0 1h30M0 19.800h30" strokeWidth="2.400" /><path d="M0 4.800h30" strokeWidth="1.800" />
                  <path d="M1 4v16M29 4v16" strokeWidth="2" /><path d="M6.600 5v13M12.200 5v13M17.800 5v13M23.400 5v13" strokeWidth="1.800" opacity=".85" />
                </svg>
              </Item>
              <Item $mr={24}><Bell /></Item>
              <Item $mr={25}><Rocket /><Fit w={47}>2480</Fit></Item>
              <Item $mr={35}>
                <svg width="30" height="27" viewBox="0 0 30 27">
                  <defs><linearGradient id="helm" x1="0" x2="0" y2="1"><stop stopColor="#dfe0e6" /><stop offset="1" stopColor="#8d929b" /></linearGradient></defs>
                  <path fillRule="evenodd" d="M15 0c6.500 0 10.500 3.500 12 8h1.500q1.500 0 1.500 1.500v9q0 1.500-1.500 1.500H27c-2 4.500-6 7-12 7S5 24.500 3 20H1.500Q0 20 0 18.500v-9Q0 8 1.500 8H3C4.500 3.500 8.500 0 15 0zM10 8q-5 0-5 6 0 8.500 10 8.500T25 14q0-6-5-6z" fill="url(#helm)" />
                </svg>
              </Item>
              <Connected>
                <Fit w={74}>Connected</Fit>
                <Check><Ico d="M2 10l6 8L20 1" s={22} box={22} w={2} c="#10002a" /></Check>
              </Connected>
            </Status>
          </Header>
          <Title><TitleText><Spaced>MISSION </Spaced>CONTROL</TitleText></Title>
          <Cards>
            <Card>
              <Heading><Fit w={221}>Astro Credits</Fit></Heading>
              <Copy $mt={23}>
                <Fit w={279}>Join Space Race missions to</Fit>
                <Fit w={253}>level up your cross-chain</Fit>
                <Fit w={265}>knowledge and earn <em>Astro</em></Fit>
                <Fit w={75}><em>Credits</em>.</Fit>
              </Copy>
            </Card>
            <Card>
              <Heading><Fit w={152}>Missions</Fit></Heading>
              <Copy $mt={26}>
                <Fit w={331}>Earn <em>Astro Credits</em> by completing</Fit>
                <Fit w={314}>missions, referring friends, and</Fit>
                <Fit w={331}>completing side quests on Galxe.</Fit>
              </Copy>
            </Card>
            <Card>
              <Heading><Fit w={308}>Refer Your Friends</Fit></Heading>
              <Copy $mt={28}>
                <Fit w={259}>Invite your friends to earn</Fit>
                <Fit w={323}>additional <em>Astro Credits</em>. You can</Fit>
                <Fit w={354}>find your custom referral link in the</Fit>
                <Fit w={116}>Flight Deck.</Fit>
              </Copy>
            </Card>
          </Cards>
          <Launch><Heading><Fit w={857}>New Missions Launch Every Thursday at 12:00 UTC</Fit></Heading></Launch>
        </Page>
        <Scrollbar><Arrow /><Thumb /><Arrow $down /></Scrollbar>
        <Floating>
          <BookButton>
            <svg width="22" height="19" viewBox="0 0 22 19" fill="none" stroke="#222" strokeWidth="1.800">
              <path d="M11 2.500Q9 1 6 1H1v14.500h6q3 0 4 1.500 1-1.500 4-1.500h6V1h-5q-3 0-5 1.500zV18" /><path d="M14 5h4.500M14 8.300h4.500M14 11.600h4.500" strokeWidth="1.500" />
            </svg>
          </BookButton>
          <BrainButton><Brain /></BrainButton>
        </Floating>
      </Viewport>

      <Taskbar>
        <Slot $ml={26}>
          <svg width="30" height="28" viewBox="0 0 30 28">
            <rect width="30" height="28" rx="2" fill="#0d6cbf" /><rect x="2.500" y="2.500" width="12" height="23" rx="1" fill="#fff" />
            <rect x="17" y="2.500" width="11" height="12.500" fill="#6fd8ff" /><rect x="17" y="15" width="11" height="5" fill="#26a0f5" /><rect x="17" y="20" width="11" height="5.500" fill="#0b83e8" />
          </svg>
        </Slot>
        <Slot $ml={473}>
          <svg width="29" height="29" viewBox="0 0 29 29">
            <defs><linearGradient id="win" x1="0" y1="0" x2="1" y2="1"><stop stopColor="#7fe6fb" /><stop offset="1" stopColor="#1a9cf5" /></linearGradient></defs>
            <path d="M0 0h14v14H0zM15 0h14v14H15zM0 15h14v14H0zM15 15h14v14H15z" fill="url(#win)" />
          </svg>
        </Slot>
        <SearchBox>
          <svg width="20" height="20" viewBox="0 0 20 20" fill="none" stroke="#eef2f8" strokeWidth="2"><circle cx="8.500" cy="8" r="7" /><path d="M13.500 13l5 5.500" strokeWidth="2.600" /></svg>
          <SearchLabel><Fit w={52}>Search</Fit></SearchLabel>
          <Waterfall />
        </SearchBox>
        <Slot $ml={15}><Taskview /></Slot>
        <Slot $ml={24}><ChatIcon /></Slot>
        <Slot $ml={26}><Count>99+</Count><Dot /></Slot>
        <Slot $ml={25}><Vscode /></Slot>
        <Slot $ml={24}><SpotifyMark size={28} color="#1ed760" /></Slot>
        <Slot $ml={26}><Edge /></Slot>
        <Slot $ml={25}><Game /></Slot>
        <Slot $ml={79}><TelegramMark size={27} color="#2ba0dc" /><RedBadge>..89</RedBadge><Dot /></Slot>
        <ActiveApp><Chrome /><BlueBadge>9</BlueBadge><Dot $w={20} $c="#4cc2ff" /></ActiveApp>
        <Slot $ml={168}><Ico d="M1 11l6-7 6 7" s={14} box={14} w={1.8} /></Slot>
        <TwoLine $ml={18} $align="center"><Fit w={30}>ENG</Fit><Fit w={20}>UK</Fit></TwoLine>
        <Slot $ml={22} $w={20}>
          <svg width="20" height="16" viewBox="0 0 20 16" fill="none" stroke="#fff" strokeWidth="1.500">
            <path d="M1 5.500Q10-3.500 19 5.500M3.800 8.500Q10 2.500 16.200 8.500M6.500 11.300Q10 8 13.500 11.300" /><circle cx="10" cy="13.700" r="1.300" fill="#fff" />
          </svg>
        </Slot>
        <Slot $ml={9} $w={22}>
          <svg width="20" height="16" viewBox="0 0 20 16" fill="none" stroke="#fff" strokeWidth="1.400"><path d="M1 5.300h3.500L9.500 1v14l-5-4.300H1zM13 5l6 6M19 5l-6 6" /></svg>
        </Slot>
        <TwoLine $ml={20} $align="flex-end"><Fit w={36}>03:10</Fit><Fit w={78}>25/09/2024</Fit></TwoLine>
        <Slot $ml={9} $w={18}>
          <svg width="17" height="19" viewBox="0 0 17 19" fill="#9ae6ff"><path d="M8.500 0q6 0 6 6.500v5l2 3.500H.5l2-3.500v-5Q2.500 0 8.500 0zM5.500 16.300h6q-1 2.500-3 2.500t-3-2.500z" /></svg>
        </Slot>
        <Slot $ml={22}><Copilot /><Pre>PRE</Pre></Slot>
      </Taskbar>
    </Screen>
  );
}
